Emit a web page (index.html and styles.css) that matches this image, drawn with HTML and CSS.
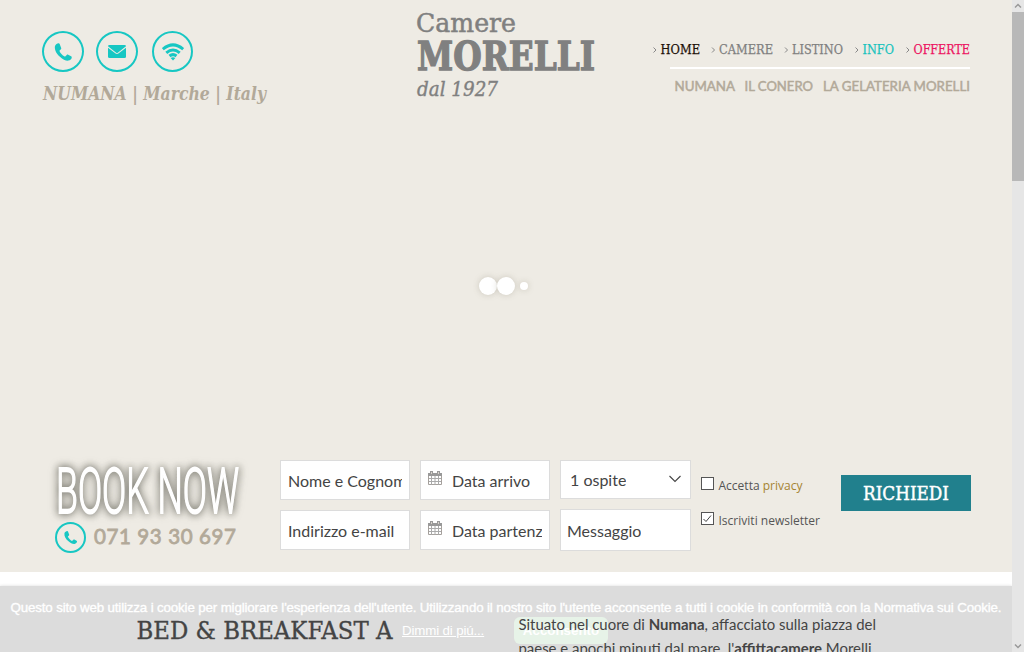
FILE: index.html
```html
<!DOCTYPE html>
<html lang="it">
<head>
<meta charset="utf-8">
<title>Camere Morelli - Numana</title>
<link rel="stylesheet" href="styles.css">
</head>
<body>
<svg width="0" height="0" class="defs">
  <symbol id="phone" viewBox="0 0 24 24"><path d="M6.6 1.6 C5.2 2 3 2.8 2.3 5 C1.6 9.5 4.5 14.3 8.3 17.6 C12 21 15.600 22.700 18.500 22.300 C20.700 22 22.300 20.500 22.500 18.500 C22.600 17.800 22.400 17.400 21.700 17 L18.200 15.200 C17.500 14.900 17 15.100 16.500 15.600 L15 17.200 C14.500 17.600 14 17.500 13.500 17.200 C11.500 16 9.200 13.500 8 11.300 C7.700 10.700 7.700 10.300 8.200 9.900 L9.500 8.700 C10 8.200 10 7.700 9.800 7.100 L8 2.500 C7.700 1.700 7.200 1.400 6.600 1.600Z"/></symbol>
  <symbol id="cal" viewBox="0 0 14 15"><path d="M.5 4v9.500h13V4" fill="#fff" stroke="#a5a09c"/><path d="M0 2h14v3H0z" fill="#999"/><path d="M3.500 5v9M7 5v9M10.500 5v9M1 7.500h12M1 10.500h12" stroke="#aaa" fill="none"/><path d="M3.500 0v4M10.500 0v4" stroke="#999" stroke-width="3"/><path d="M3.500 1v2M10.500 1v2" stroke="#d8d2cc"/></symbol>
</svg>
<div class="window">
  <div class="page">
    <div class="hero">
      <header class="header">
        <div class="contacts">
          <div class="circles">
            <a class="circle"><svg width="20" height="20"><use href="#phone"/></svg></a>
            <a class="circle"><svg width="18" height="15" viewBox="0 0 18 16" preserveAspectRatio="none"><path d="M1.500 1h15Q18 1 18 2.500L9.800 9.200Q9 9.800 8.200 9.200L0 2.500Q0 1 1.500 1ZM0 4l7.600 6.100q1.400 1 2.800 0L18 4v9.500q0 1.500-1.500 1.500h-15Q0 15 0 13.500Z"/></svg></a>
            <a class="circle circle-wifi"><svg class="wifi" width="22" height="18" viewBox="0 0 22 18"><path d="M.8 6.200Q11-2.400 21.200 6.200M4.300 9.800q6.700-5.600 13.400 0M7.500 13q3.500-2.800 7 0" /><path class="dot" d="M8.600 15q2.400-1.500 4.800 0L11 17.500Z"/></svg></a>
          </div>
          <svg class="fit place" width="225" height="28"><text x="1" y="20" textLength="223" lengthAdjust="spacingAndGlyphs">NUMANA | Marche | Italy</text></svg>
        </div>
        <svg class="fit logo" width="180" height="100">
          <text class="l1" x="-1" y="32" textLength="100" lengthAdjust="spacingAndGlyphs">Camere</text>
          <text class="l2" x="0" y="70" textLength="178" lengthAdjust="spacingAndGlyphs">MORELLI</text>
          <text class="l3" x="0" y="96" textLength="81" lengthAdjust="spacingAndGlyphs">dal 1927</text>
        </svg>
        <nav class="menus">
          <svg class="fit nav1" width="318" height="25">
            <path class="chev" d="M1.500 8.500l2.500 2.500-2.500 2.500M60 8.500l2.500 2.500-2.500 2.500M133 8.500l2.500 2.500-2.500 2.500M203.500 8.500l2.500 2.500-2.500 2.500M254.500 8.500l2.500 2.500-2.500 2.500"/>
            <text class="active" x="8.500" y="15" textLength="39.500" lengthAdjust="spacingAndGlyphs">HOME</text>
            <text x="67" y="15" textLength="54" lengthAdjust="spacingAndGlyphs">CAMERE</text>
            <text x="140" y="15" textLength="51" lengthAdjust="spacingAndGlyphs">LISTINO</text>
            <text class="info" x="210.500" y="15" textLength="31.500" lengthAdjust="spacingAndGlyphs">INFO</text>
            <text class="offers" x="261.500" y="15" textLength="56.500" lengthAdjust="spacingAndGlyphs">OFFERTE</text>
          </svg>
          <div class="rule"></div>
          <svg class="fit nav2" width="296" height="24">
            <text x="0.500" y="15" textLength="60.500" lengthAdjust="spacingAndGlyphs">NUMANA</text>
            <text x="70.500" y="15" textLength="68.500" lengthAdjust="spacingAndGlyphs">IL CONERO</text>
            <text x="149" y="15" textLength="147" lengthAdjust="spacingAndGlyphs">LA GELATERIA MORELLI</text>
          </svg>
        </nav>
      </header>
      <div class="loader"><i></i><i></i><i class="small"></i></div>
      <form class="booking">
        <div class="book">
          <svg class="fit booknow" width="185" height="62"><text x="0" y="53" textLength="183" lengthAdjust="spacingAndGlyphs">BOOK NOW</text></svg>
          <div class="tel">
            <span class="circle mini"><svg width="15" height="15"><use href="#phone"/></svg></span>
            <svg class="fit number" width="144" height="31"><text x="0" y="22" textLength="142">071 93 30 697</text></svg>
          </div>
        </div>
        <div class="col">
          <div class="field"><span>Nome e Cognome</span></div>
          <div class="field"><span>Indirizzo e-mail</span></div>
        </div>
        <div class="col">
          <div class="field"><svg class="cal" width="14" height="15"><use href="#cal"/></svg><span>Data arrivo</span></div>
          <div class="field"><svg class="cal" width="14" height="15"><use href="#cal"/></svg><span>Data partenza</span></div>
        </div>
        <div class="col wide">
          <div class="field select"><span>1 ospite</span><svg width="12" height="8"><path d="M.5 1l5.500 5.500L11.500 1"/></svg></div>
          <div class="field message"><span>Messaggio</span></div>
        </div>
        <div class="checks">
          <label><span class="box"></span><svg class="fit" width="102" height="18"><text x="0.500" y="13" textLength="84" lengthAdjust="spacingAndGlyphs">Accetta <tspan class="gold">privacy</tspan></text></svg></label>
          <label><span class="box"><svg width="11" height="11"><path d="M1.500 6l2.500 2.500L9 2.500"/></svg></span><svg class="fit" width="102" height="18"><text x="0.500" y="13" textLength="101.500" lengthAdjust="spacingAndGlyphs">Iscriviti newsletter</text></svg></label>
        </div>
        <div class="send"><svg class="fit" width="86" height="36"><text x="0" y="25" textLength="86" lengthAdjust="spacingAndGlyphs">RICHIEDI</text></svg></div>
      </form>
    </div>
    <main class="content">
      <svg class="fit title" width="256" height="40"><text x="-0.500" y="27" textLength="256" lengthAdjust="spacingAndGlyphs">BED &amp; BREAKFAST A</text></svg>
      <p class="intro">Situato nel cuore di <b>Numana</b>, affacciato sulla piazza del<br>paese e apochi minuti dal mare, l'<b>affittacamere</b> Morelli</p>
    </main>
    <div class="cookie">
      <svg class="fit" width="992" height="31"><text x="0.500" y="26" textLength="991">Questo sito web utilizza i cookie per migliorare l'esperienza dell'utente. Utilizzando il nostro sito l'utente acconsente a tutti i cookie in conformità con la Normativa sui Cookie.</text></svg>
      <div class="actions"><a>Dimmi di piú...</a><span class="ok">Acconsento</span></div>
    </div>
  </div>
  <div class="scroll">
    <svg width="12" height="12"><path d="M3 7.500l3-3 3 3"/></svg>
    <div class="thumb"></div>
    <svg width="12" height="12"><path d="M3 4.500l3 3 3-3"/></svg>
  </div>
</div>
</body>
</html>
```
FILE: styles.css
```css
* { box-sizing: border-box; }
body { margin: 0; overflow: hidden; font-family: Lato, sans-serif; color: #444; }
.defs { position: absolute; }
.fit { display: block; overflow: visible; flex: none; }
.window { display: flex; width: 1024px; height: 652px; overflow: hidden; }
.page { position: relative; width: 1012px; height: 652px; overflow: hidden; background: #fff; }
.hero { height: 572px; background: #eeebe4; }

.header { display: flex; height: 277px; }
.contacts { width: 375px; padding: 31px 0 0 42px; }
.circles { display: flex; gap: 12px; }
.circle { display: flex; align-items: center; justify-content: center; width: 42px; height: 41px; border: 2px solid #17c7c3; border-radius: 50%; fill: #17c7c3; flex: none; }
.circle-wifi { width: 41px; margin-left: 2px; }
.wifi path { fill: none; stroke: #17c7c3; stroke-width: 3; }
.wifi .dot { fill: #17c7c3; stroke: none; }
.place { margin-top: 8px; font: italic bold 18px "DejaVu Serif", serif; fill: #b2a999; }
.logo { margin-left: 42px; fill: #808080; stroke: #808080; font-family: "DejaVu Serif", serif; }
.l1 { font-size: 25.500px; stroke-width: .5px; }
.l2 { font-size: 39px; font-weight: bold; stroke-width: 1.300px; }
.l3 { font-size: 20.500px; font-style: italic; stroke-width: .4px; }
.menus { display: flex; flex-direction: column; align-items: flex-end; width: 373px; padding-top: 39px; }
.nav1 { font: 12.500px "DejaVu Serif", serif; fill: #808080; height: 28px; }
.nav1 text { stroke: currentColor; stroke-width: .25px; color: #808080; }
.chev { fill: none; stroke: #888; }
.nav1 .active { fill: #1d1109; color: #1d1109; }
.nav1 .info { fill: #19c3bd; color: #19c3bd; }
.nav1 .offers { fill: #ec1561; color: #ec1561; }
.rule { width: 300px; height: 2px; background: #fff; }
.nav2 { margin-top: 7px; font: 13.500px Lato, sans-serif; fill: #b2a999; stroke: #b2a999; stroke-width: .5px; }

.loader { display: flex; align-items: center; height: 18px; padding-left: 479px; }
.loader i { width: 18px; height: 18px; border-radius: 50%; background: #fff; box-shadow: 0 0 6px rgba(120,110,90,.28); }
.loader .small { width: 8px; height: 8px; margin-left: 5px; }

.booking { display: flex; padding-top: 165px; font-size: 16px; }
.book { width: 280px; padding-left: 55px; }
.booknow { margin-left: 1px; font: 300 63px Roboto, sans-serif; fill: #fff; stroke: #fff; stroke-width: 1.800px; filter: drop-shadow(0 0 4px rgba(60,60,50,.6)) drop-shadow(0 0 3px rgba(60,60,50,.35)); }
.tel { display: flex; gap: 8px; }
.mini { width: 31px; height: 31px; }
.number { font: 20.500px Lato, sans-serif; fill: #b2a999; stroke: #b2a999; stroke-width: .8px; }
.col { display: flex; flex-direction: column; gap: 10px; width: 130px; margin-right: 10px; }
.wide { width: 131px; }
.field { display: flex; align-items: center; height: 40px; border: 1px solid #dcdcdc; background: #fff; padding: 0 7px; }
.field span { overflow: hidden; white-space: nowrap; }
.cal { flex: none; margin: -3px 10px 0 0; }
.select { height: 39px; justify-content: space-between; padding: 0 9px 1px 9px; }
.select path { fill: none; stroke: #444; stroke-width: 1.100; }
.message { height: 42px; padding-left: 6px; }
.checks { display: flex; flex-direction: column; gap: 17px; width: 140px; padding-top: 17px; font: 12px "Open Sans", sans-serif; fill: #555; }
.checks label { display: flex; gap: 4px; height: 18px; }
.box { width: 13px; height: 13px; border: 1px solid #555; background: #fff; }
.box svg { display: block; }
.box path { fill: none; stroke: #444; }
.gold { fill: #a58431; }
.send { width: 130px; height: 36px; margin-top: 15px; padding-left: 22px; background: #21808d; fill: #fff; font: 18.500px "DejaVu Serif", serif; stroke: #fff; stroke-width: .45px; }

.content { position: relative; z-index: 2; display: flex; padding: 40px 0 0 137px; }
.title { font: 24px "DejaVu Serif", serif; fill: #444; stroke: #444; stroke-width: .35px; }
.intro { margin: 0 0 0 125.500px; font-size: 14.930px; line-height: 24px; white-space: nowrap; }
.cookie { position: absolute; left: 0; bottom: 0; width: 100%; height: 66px; padding-left: 10px; background: #dcdcdc; box-shadow: 0 0 3px rgba(0,0,0,.15); font: 13.333px "Liberation Sans", sans-serif; color: #fff; fill: #fff; }
.cookie .fit { stroke: #fff; stroke-width: .35px; }
.actions { display: flex; padding-left: 392px; }
.actions a { width: 112px; padding-top: 6px; text-decoration: underline; letter-spacing: -.15px; }
.ok { width: 94px; height: 27px; padding-top: 6px; border-radius: 6px; background: #e7f3e8; font-weight: bold; text-align: center; }

.scroll { display: flex; flex-direction: column; width: 12px; background: #e6e6e6; }
.scroll svg { display: block; flex: none; }
.scroll svg:last-child { margin-top: auto; }
.scroll path { fill: none; stroke: #999; stroke-width: 1.500; }
.thumb { height: 169px; background: #b8b8b8; }
```
